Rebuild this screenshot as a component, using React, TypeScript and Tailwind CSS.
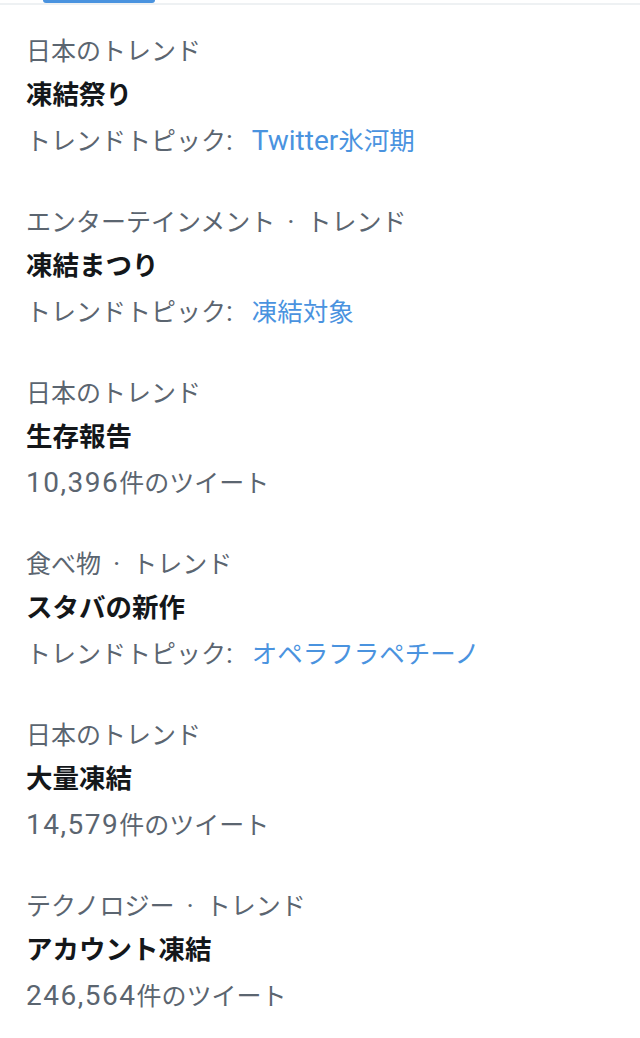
type Trend = { meta: string[]; title: string; topic?: string; count?: string };

const trends: Trend[] = [
  { meta: ['日本のトレンド'], title: '凍結祭り', topic: 'Twitter氷河期' },
  { meta: ['エンターテインメント', 'トレンド'], title: '凍結まつり', topic: '凍結対象' },
  { meta: ['日本のトレンド'], title: '生存報告', count: '10,396' },
  { meta: ['食べ物', 'トレンド'], title: 'スタバの新作', topic: 'オペラフラペチーノ' },
  { meta: ['日本のトレンド'], title: '大量凍結', count: '14,579' },
  { meta: ['テクノロジー', 'トレンド'], title: 'アカウント凍結', count: '246,564' },
];

const latin = 'font-[Roboto,sans-serif] text-[28px] leading-none';

// splits a topic into latin and CJK runs so latin text gets the larger latin face
function Topic({ text }: { text: string }) {
  const parts = text.match(/[A-Za-z0-9]+|[^A-Za-z0-9]+/g) ?? [];
  return (
    <>
      {parts.map((p, i) =>
        /[A-Za-z0-9]/.test(p) ? (
          <span key={i} className={latin}>{p}</span>
        ) : (
          <span key={i}>{p}</span>
        )
      )}
    </>
  );
}

export default function App() {
  return (
    <div
      className="min-h-[1038px] w-[640px] bg-white"
      style={{ fontFamily: '"Noto Sans CJK JP", "Noto Sans", sans-serif' }}
    >
      {/* Tab indicator */}
      <div className="flex flex-col">
        <div className="ml-[43px] h-[3px] w-[112px] rounded-b-full bg-[#4a93df]" />
        <div className="h-[2px] bg-[#eef1f3]" />
      </div>

      <div className="pt-[5px]">
        {trends.map((t, i) => (
          <div key={i} className="px-[26px] pt-[19px] pb-[18px]">
            <div className="text-[25px] leading-[41px] text-[#5b6570]">
              {t.meta.map((m, j) => (
                <span key={j}>
                  {j > 0 && <span className={`${latin} px-[12px]`}>·</span>}
                  {m}
                </span>
              ))}
            </div>
            <div className="text-[26.5px] font-bold leading-[45px] text-[#14171a]">{t.title}</div>
            {t.topic ? (
              <div className="text-[25px] leading-[48px] text-[#5b6570]">
                トレンドトピック<span className={latin}>:</span>
                <span className="ml-[19px] text-[25.5px] text-[#4a93df]">
                  <Topic text={t.topic} />
                </span>
              </div>
            ) : (
              <div className="text-[25px] leading-[48px] text-[#5b6570]">
                <span className={`${latin} tracking-[1.5px]`}>{t.count}</span>件のツイート
              </div>
            )}
          </div>
        ))}
      </div>
    </div>
  );
}
